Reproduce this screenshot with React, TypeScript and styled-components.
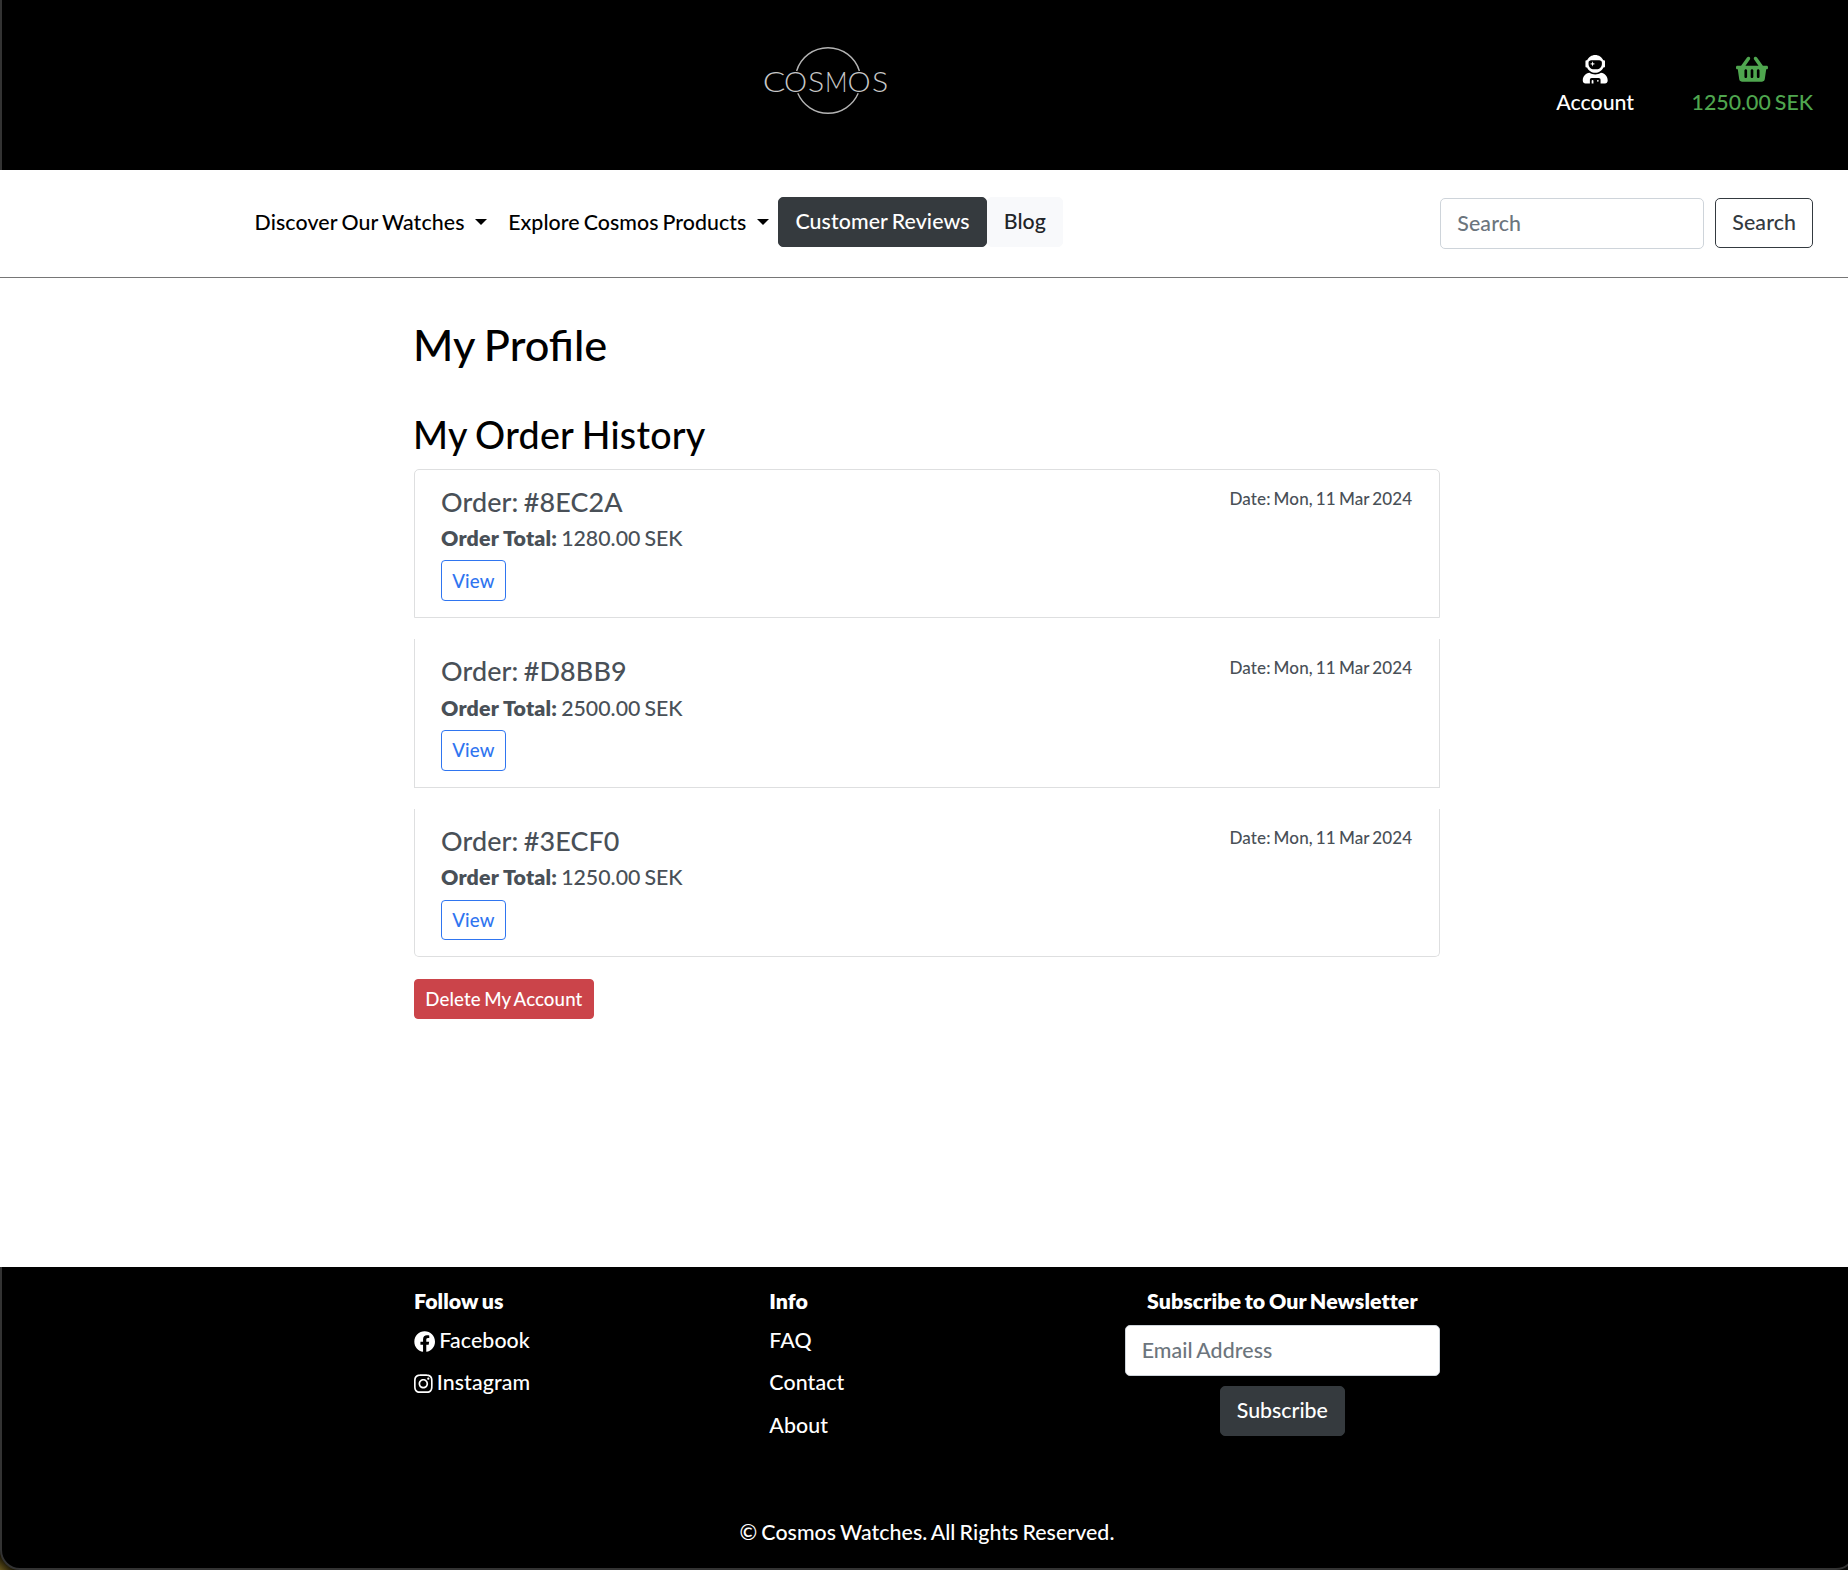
import React from "react";
import styled, { createGlobalStyle } from "styled-components";
import { FaUserAstronaut, FaShoppingBasket, FaFacebook, FaInstagram } from "react-icons/fa";

const GlobalStyle = createGlobalStyle`
  *, *::before, *::after { box-sizing: border-box; }
  body {
    margin: 0;
    background: #fff;
    color: #000;
    font-family: Lato, "Open Sans", sans-serif;
    font-size: 21.333px;
    font-weight: 500;
    line-height: 1.5;
    letter-spacing: 0.005em;
    word-spacing: -0.065em;
    overflow: hidden;
  }
  h2, h3, h5, p, ul { margin: 0; padding: 0; font-weight: 500; }
  a { color: inherit; text-decoration: none; }
  button, input { font: inherit; letter-spacing: inherit; word-spacing: inherit; }
`;

const Page = styled.div`
  display: flex;
  flex-direction: column;
  width: 1848px;
  height: 1570px;
`;

const TopBar = styled.header`
  display: flex;
  flex: none;
  height: 170px;
  padding: 40px 35px 0 761px;
  background: #000;
  border-left: 2px solid #333;
`;

const Logo = styled.svg`
  width: 130px;
  height: 82px;
  letter-spacing: 0;
`;

const TopLinks = styled.nav`
  display: flex;
  gap: 57.5px;
  margin-left: auto;
  padding-top: 15.4px;
  letter-spacing: 0;
`;

const TopLink = styled.a<{ $color: string }>`
  display: flex;
  flex-direction: column;
  align-items: center;
  color: ${(p) => p.$color};
  svg { display: block; font-size: 28.44px; margin-bottom: 3.2px; }
`;

const BasketIcon = styled(FaShoppingBasket)`
  width: 1.125em;
`;

const NavBar = styled.nav`
  display: flex;
  flex: none;
  align-items: flex-start;
  height: 108px;
  padding: 27px 35px 0 254.5px;
  border-bottom: 1px solid #767676;
`;

const DropLink = styled.a`
  padding: 10px 10.67px 8px 0;
  margin-right: 10.6px;
  letter-spacing: 0.006em;
  &:nth-child(2) { margin-right: -1px; letter-spacing: 0.003em; }
  &::after {
    content: "";
    display: inline-block;
    margin-left: 10.3px;
    vertical-align: 5.44px;
    border-top: 6px solid;
    border-right: 6px solid transparent;
    border-left: 6px solid transparent;
  }
`;

const Button = styled.button<{ $bg: string; $fg: string; $line?: string; $small?: boolean }>`
  display: inline-block;
  padding: ${(p) => (p.$small ? "5.33px 10.3px" : "8px 16px")};
  border: 1px solid ${(p) => p.$line ?? p.$bg};
  border-radius: ${(p) => (p.$small ? "4px" : "5px")};
  background: ${(p) => p.$bg};
  color: ${(p) => p.$fg};
  font-size: ${(p) => (p.$small ? "18.667px" : "21.333px")};
  line-height: 1.5;
`;

const SearchForm = styled.div`
  display: flex;
  align-items: flex-start;
  gap: 11px;
  margin-left: auto;
  padding-top: 1px;
`;

const Field = styled.input<{ $width: string }>`
  width: ${(p) => p.$width};
  height: 51px;
  padding: 7px 16px 9px;
  border: 1px solid #ced4da;
  border-radius: 5px;
  background: #fff;
  outline: none;
  &::placeholder { color: #6c757d; opacity: 1; }
`;

const Main = styled.main`
  flex: 1;
  width: 1026px;
  margin-left: 414px;
  padding-top: 41px;
`;

const Title = styled.h2`
  font-size: 43.3px;
  line-height: 51px;
  letter-spacing: 0;
  text-indent: -1px;
`;

const SubTitle = styled.h3`
  margin-top: 43.2px;
  font-size: 37.6px;
  line-height: 44.8px;
  letter-spacing: 0.007em;
  text-indent: -1px;
`;

const Orders = styled.ul`
  display: flex;
  flex-direction: column;
  gap: 21.33px;
  margin: 10.67px 0 21.33px;
  list-style: none;
`;

const Order = styled.li`
  display: flex;
  justify-content: space-between;
  padding: 16px 26.67px 16px 26px;
  border: 1px solid #dedfe0;
  color: #495057;
  &:first-child { border-radius: 5px 5px 0 0; }
  &:last-child { border-radius: 0 0 5px 5px; }
  &:not(:first-child) { border-top: 0; }
`;

const OrderName = styled.h5`
  margin-bottom: 5.33px;
  font-size: 26.9px;
  line-height: 32px;
`;

const OrderTotal = styled.p`
  margin-bottom: 5.33px;
  letter-spacing: 0;
  strong { font-weight: 800; letter-spacing: 0.18px; word-spacing: 0; }
`;

const ViewButton = styled(Button)`
  display: block;
`;

const OrderDate = styled.small`
  font-size: 17.07px;
`;

const Footer = styled.footer`
  position: relative;
  display: flex;
  flex: none;
  flex-direction: column;
  justify-content: space-between;
  height: 303px;
  padding: 19px 408px 21px 414px;
  overflow: hidden;
  background: linear-gradient(45deg, #66551c 0, #221c08 9px, #0a0a08 16px, #0a0a08 100%);
  color: #fff;
`;

const WindowFrame = styled.div`
  position: absolute;
  inset: -30px -8px 0 0;
  border: 2px solid #333;
  border-radius: 0 0 20px 20px;
  background: #000;
`;

const Columns = styled.div`
  position: relative;
  display: grid;
  grid-template-columns: repeat(3, 1fr);
  gap: 40px;
`;

const Column = styled.div<{ $center?: boolean }>`
  display: flex;
  flex-direction: column;
  align-items: ${(p) => (p.$center ? "center" : "flex-start")};
`;

const ColumnTitle = styled.strong`
  margin-bottom: 7.2px;
  font-weight: 800;
  letter-spacing: 0.003em;
`;

const FootLink = styled.a`
  display: flex;
  align-items: center;
  gap: 4px;
  margin-bottom: 10.2px;
`;

const InstagramIcon = styled(FaInstagram)`
  width: 0.875em;
`;

const Subscribe = styled(Button)`
  margin-top: 10px;
  letter-spacing: 0;
`;

const Copyright = styled.p`
  position: relative;
  text-align: center;
  letter-spacing: 0.003em;
`;

const orders = [
  { id: "#8EC2A", total: "1280.00 SEK" },
  { id: "#D8BB9", total: "2500.00 SEK" },
  { id: "#3ECF0", total: "1250.00 SEK" },
];

const logoLetters = [
  { char: "C", x: 11, stretch: 1.24 },
  { char: "O", x: 32.6, stretch: 1.08 },
  { char: "S", x: 53.2, stretch: 1.12 },
  { char: "M", x: 73.4, stretch: 0.92 },
  { char: "O", x: 96.1, stretch: 1.08 },
  { char: "S", x: 117, stretch: 1.12 },
];

const CosmosLogo = () => (
  <Logo viewBox="0 0 130 82" aria-label="Cosmos">
    <g fill="none" stroke="#b4b4b4" strokeWidth="1.4">
      <path d="M33.6 31A32.8 32.8 0 0 1 96.4 31" />
      <path d="M34.8 53.3A32.8 32.8 0 0 0 95.2 53.3" />
    </g>
    <g textAnchor="middle" fill="#c8c8c8" fontFamily="Lato" fontWeight="300" fontSize="27">
      {logoLetters.map((letter) => (
        <text
          key={letter.x}
          transform={`translate(${letter.x} 52) scale(${letter.stretch} 1)`}
        >
          {letter.char}
        </text>
      ))}
    </g>
  </Logo>
);

export default function App() {
  return (
    <Page>
      <GlobalStyle />
      <TopBar>
        <CosmosLogo />
        <TopLinks>
          <TopLink $color="#fff" href="#">
            <FaUserAstronaut />
            Account
          </TopLink>
          <TopLink $color="#4fa64f" href="#">
            <BasketIcon />
            1250.00 SEK
          </TopLink>
        </TopLinks>
      </TopBar>
      <NavBar>
        <DropLink href="#">Discover Our Watches</DropLink>
        <DropLink href="#">Explore Cosmos Products</DropLink>
        <Button $bg="#353a3e" $fg="#fff">Customer Reviews</Button>
        <Button $bg="#f8f9fb" $fg="#212529">Blog</Button>
        <SearchForm>
          <Field $width="264px" placeholder="Search" />
          <Button $bg="#fff" $fg="#343a40" $line="#343a40">Search</Button>
        </SearchForm>
      </NavBar>
      <Main>
        <Title>My Profile</Title>
        <SubTitle>My Order History</SubTitle>
        <Orders>
          {orders.map((order) => (
            <Order key={order.id}>
              <div>
                <OrderName>Order: {order.id}</OrderName>
                <OrderTotal>
                  <strong>Order Total:</strong> {order.total}
                </OrderTotal>
                <ViewButton $small $bg="#fff" $fg="#2f75f0" $line="#2f75f0">View</ViewButton>
              </div>
              <OrderDate>Date: Mon, 11 Mar 2024</OrderDate>
            </Order>
          ))}
        </Orders>
        <Button $small $bg="#cb444a" $fg="#fff">Delete My Account</Button>
      </Main>
      <Footer>
        <WindowFrame />
        <Columns>
          <Column>
            <ColumnTitle>Follow us</ColumnTitle>
            <FootLink href="#"><FaFacebook /> Facebook</FootLink>
            <FootLink href="#"><InstagramIcon /> Instagram</FootLink>
          </Column>
          <Column>
            <ColumnTitle>Info</ColumnTitle>
            <FootLink href="#">FAQ</FootLink>
            <FootLink href="#">Contact</FootLink>
            <FootLink href="#">About</FootLink>
          </Column>
          <Column $center>
            <ColumnTitle>Subscribe to Our Newsletter</ColumnTitle>
            <Field $width="100%" placeholder="Email Address" />
            <Subscribe $bg="#353a3e" $fg="#fff">Subscribe</Subscribe>
          </Column>
        </Columns>
        <Copyright>© Cosmos Watches. All Rights Reserved.</Copyright>
      </Footer>
    </Page>
  );
}
